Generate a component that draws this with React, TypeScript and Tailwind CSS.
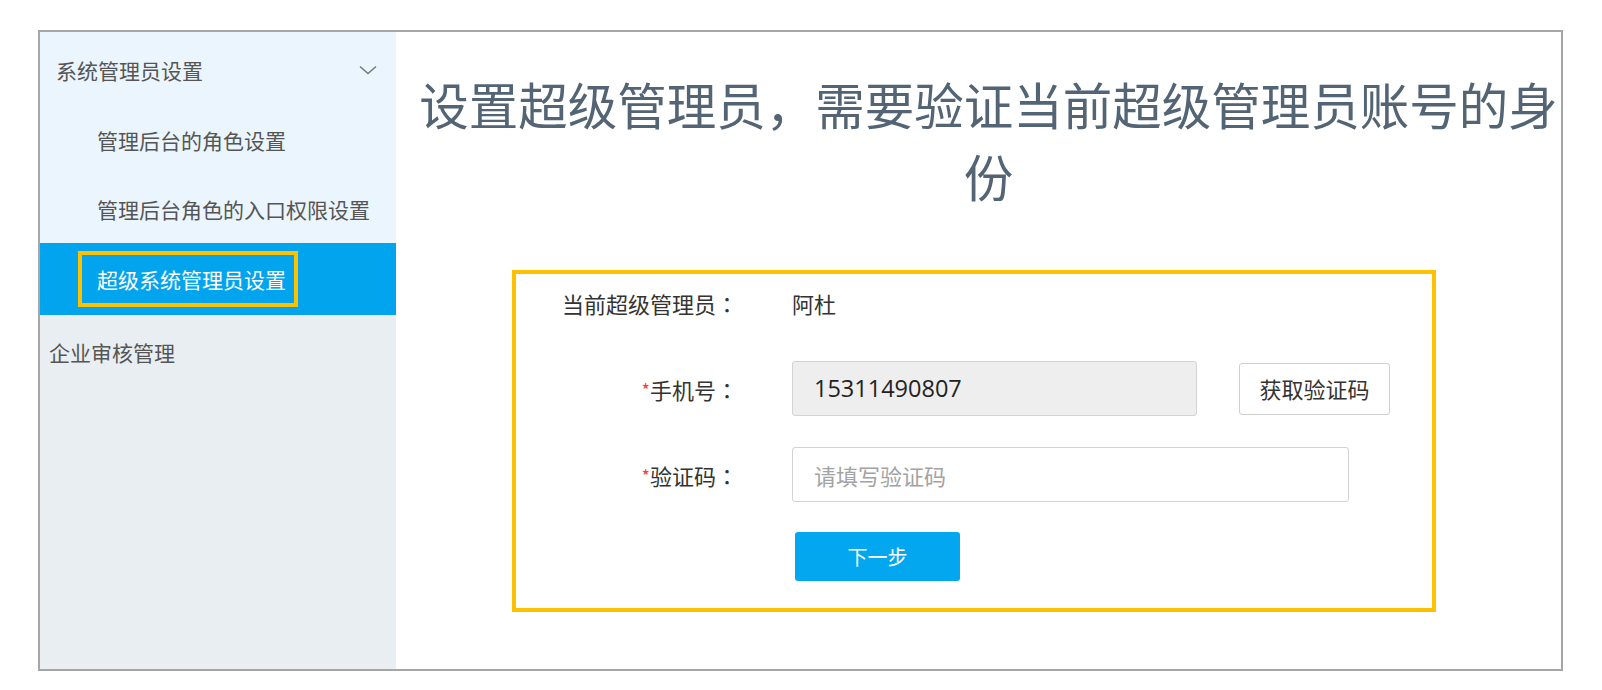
import React from 'react';

const cjk = { fontFamily: '"Noto Sans CJK SC", "Noto Sans", sans-serif' };
const jp = { fontFamily: '"Noto Sans CJK JP", sans-serif' };

function Chevron() {
  return (
    <svg width="18" height="10" viewBox="0 0 18 10" fill="none">
      <path d="M1 1.5 L9 8.5 L17 1.5" stroke="#6b7b8b" strokeWidth="1.5" />
    </svg>
  );
}

function Sidebar() {
  return (
    <div className="w-[356px] flex flex-col text-[21px] leading-[30px] text-[#555]">
      {/* 系统管理员设置 group */}
      <div className="bg-[#ebf5fd]">
        <div className="h-[73px] pt-[3px] flex items-center justify-between pl-[16px] pr-[19px]">
          <span>系统管理员设置</span>
          <Chevron />
        </div>
        <div className="h-[70px] flex items-center pl-[57px]">管理后台的角色设置</div>
        <div className="h-[68px] flex items-center pl-[57px]">管理后台角色的入口权限设置</div>
      </div>
      <div className="h-[72px] bg-[#03a4ee] flex items-center">
        <div className="ml-[38px] w-[220px] h-[56px] border-4 border-[#ffc000] flex items-center pl-[15px] text-white">
          超级系统管理员设置
        </div>
      </div>
      <div className="flex-1 bg-[#e8eef2] pl-[9px] pt-[22px]">企业审核管理</div>
    </div>
  );
}

function Label({ children, required }: { children: React.ReactNode; required?: boolean }) {
  return (
    <div className="w-[222px] text-right text-[22px] leading-[30px] text-[#333]">
      {required && <span className="text-[#ff3b30] text-[18px] align-top">*</span>}
      {children}
      <span style={jp}>：</span>
    </div>
  );
}

export default function App() {
  return (
    <div className="w-[1602px] h-[690px] bg-white pt-[30px] pl-[38px]" style={cjk}>
      <div className="w-[1525px] h-[641px] border-2 border-[#a6a6a6] flex">
        <Sidebar />

        <div className="flex-1 flex flex-col bg-white">
          <h1 className="mt-[36px] pl-[20px] text-center text-[49.5px] leading-[72px] font-normal text-[#536474]">
            设置超级管理员，需要验证当前超级管理员账号的身份
          </h1>

          <div className="mt-[58px] ml-[116px] w-[924px] h-[342px] border-4 border-[#ffc000] pt-[14px]">
            <div className="flex items-center h-[30px]">
              <Label>当前超级管理员</Label>
              <div className="ml-[54px] text-[22px] leading-[30px] text-[#333]">阿杜</div>
            </div>

            <div className="flex items-center mt-[43px]">
              <Label required>手机号</Label>
              <div
                className="ml-[54px] w-[405px] h-[55px] rounded-[3px] border border-[#d3d3d3] bg-[#eeeeee] flex items-center pl-[21px] text-[23.5px] text-[#222]"
                style={{ fontFamily: '"Open Sans", sans-serif' }}
              >
                15311490807
              </div>
              <button className="ml-[42px] w-[151px] h-[52px] rounded-[3px] border border-[#cfcfcf] bg-white text-[22px] text-[#333]">
                获取验证码
              </button>
            </div>

            <div className="flex items-center mt-[31px]">
              <Label required>验证码</Label>
              <input
                className="ml-[54px] w-[557px] h-[55px] rounded-[3px] border border-[#d3d3d3] bg-white pl-[21px] text-[22px] text-[#333] placeholder:text-[#a3a3a3] outline-none"
                placeholder="请填写验证码"
                style={cjk}
              />
            </div>

            <div className="flex mt-[30px]">
              <div className="w-[222px]" />
              <button className="ml-[57px] w-[165px] h-[49px] rounded-[3px] bg-[#02a7f0] text-white text-[20px]">
                下一步
              </button>
            </div>
          </div>
        </div>
      </div>
    </div>
  );
}
